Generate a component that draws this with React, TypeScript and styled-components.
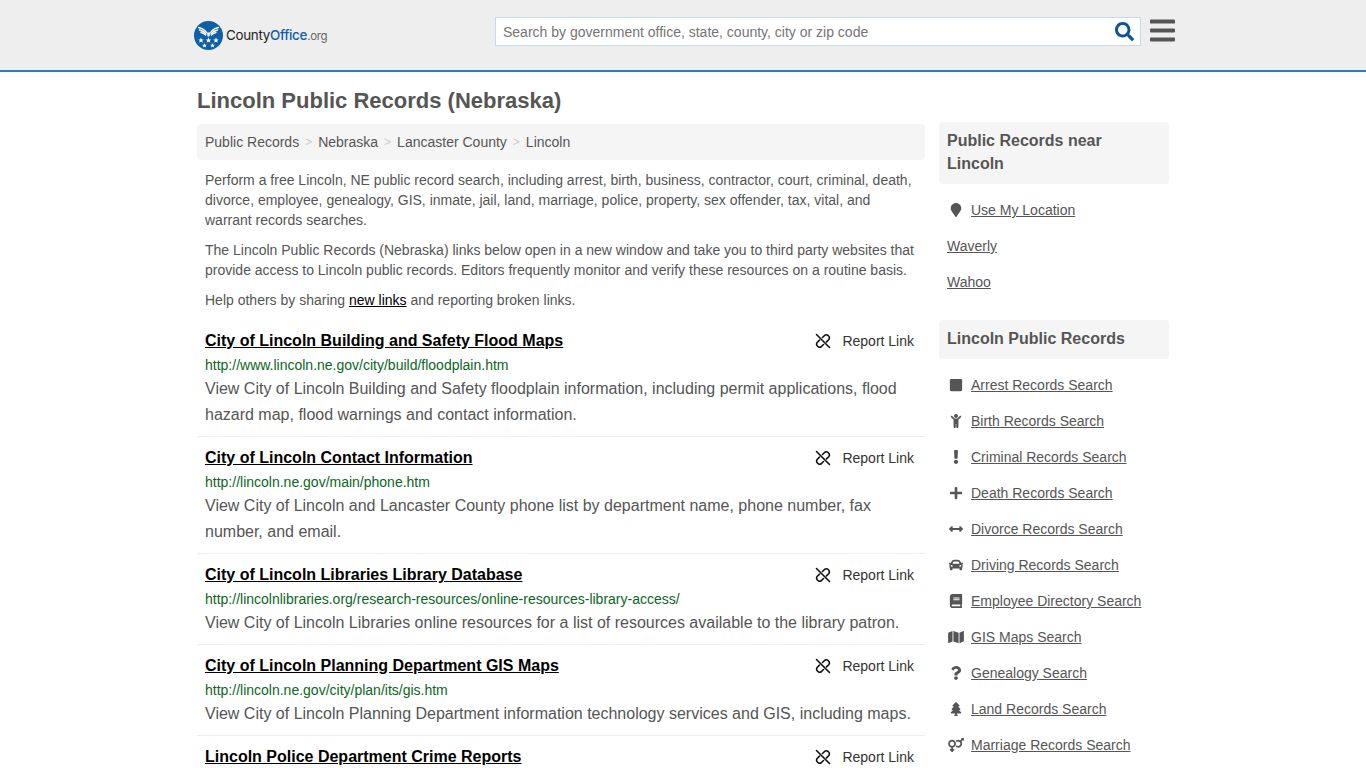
import React from "react";
import styled, { createGlobalStyle } from "styled-components";
import {
  FaSquare, FaChild, FaExclamation, FaPlus, FaArrowsAltH, FaCar, FaBook, FaMap,
  FaQuestion, FaTree, FaVenusMars, FaMapMarker, FaSearch, FaBars,
} from "react-icons/fa";

const Global = createGlobalStyle`
  html, body { margin: 0; padding: 0; background: #fff; height: 768px; overflow: hidden; }
  body { font-family: "Liberation Sans", Arial, sans-serif; color: #555; font-size: 14px; }
  * { box-sizing: border-box; }
`;

const Header = styled.header`
  height: 72px;
  background: #eeeeee;
  border-bottom: 2px solid #337ab7;
`;
const HeaderInner = styled.div`
  width: 992px;
  margin: 0 0 0 187px;
  height: 70px;
  display: flex;
  align-items: flex-start;
`;
const Logo = styled.a`
  display: flex;
  align-items: center;
  width: 301px;
  height: 30px;
  margin: 20px 0 0 7px;
  gap: 3px;
`;
const LogoText = styled.span`
  font-family: Inter, "Liberation Sans", sans-serif;
  font-size: 13.4px;
  letter-spacing: -0.3px;
  color: #222;
`;
const LogoBlue = styled.span`
  color: #0f5ea8;
  font-weight: 500;
`;
const LogoGray = styled.span`
  color: #666;
  font-size: 11.5px;
`;
const SearchBox = styled.div`
  width: 646px;
  height: 29px;
  margin-top: 17px;
  background: #fff;
  border: 1px solid #c9d9e6;
  display: flex;
  align-items: center;
  justify-content: space-between;
  padding: 0 6px 0 7px;
  font-size: 14px;
  color: #757575;
`;
const SearchIcon = styled(FaSearch)`
  width: 19px;
  height: 19px;
  color: #0b5394;
`;
const Burger = styled(FaBars)`
  width: 25px;
  height: 29px;
  margin: 16px 0 0 9px;
  color: #555;
`;
const Page = styled.div`
  width: 972px;
  margin-left: 197px;
  display: grid;
  grid-template-columns: 728px 230px;
  column-gap: 14px;
`;
const Main = styled.main``;
const Title = styled.h1`
  margin: 16px 0 0;
  height: 36px;
  font-size: 22px;
  line-height: 25px;
  font-weight: 700;
  color: #555;
`;
const Crumbs = styled.nav`
  height: 36px;
  background: #f5f5f5;
  border-radius: 4px;
  padding: 0 8px;
  display: flex;
  align-items: center;
  gap: 6px;
  font-size: 14px;
  color: #555;
`;
const Sep = styled.span`
  color: #ccc;
  font-size: 12px;
`;
const Intro = styled.p<{ $first?: boolean }>`
  margin: ${(p) => (p.$first ? "10px" : "0")} 0 10px;
  padding: 0 8px;
  font-size: 14px;
  line-height: 20px;
  color: #555;
`;
const Rows = styled.div`
  margin-top: 18px;
`;
const InlineLink = styled.a`
  color: #000;
  text-decoration: underline;
`;
const Row = styled.article`
  padding: 0 8px 8px;
  border-bottom: 1px solid #eee;
  margin-bottom: 8px;
`;
const RowHead = styled.div`
  display: flex;
  justify-content: space-between;
  align-items: center;
  height: 26px;
`;
const RowTitle = styled.a`
  font-size: 16px;
  font-weight: 700;
  color: #000;
  text-decoration: underline;
`;
const Report = styled.span`
  display: flex;
  align-items: center;
  gap: 11px;
  padding-right: 3px;
  font-size: 14px;
  color: #333;
`;
const UnlinkSvg = styled.svg`
  width: 16px;
  height: 16px;
  fill: none;
  stroke: #111;
  stroke-width: 1.6;
  stroke-linecap: round;
  stroke-linejoin: round;
`;
const Url = styled.div`
  font-size: 14px;
  line-height: 20px;
  margin: 1px 0;
  color: #0b6623;
`;
const Desc = styled.p`
  margin: 0;
  font-size: 16px;
  line-height: 26px;
  color: #555;
`;
const Side = styled.aside`
  padding-top: 50px;
`;
const SideHead = styled.h3`
  margin: 0 0 8px;
  background: #f5f5f5;
  border-radius: 4px;
  padding: 7px 8px 9px;
  font-size: 16px;
  line-height: 23px;
  font-weight: 700;
  color: #555;
`;
const SideList = styled.ul`
  list-style: none;
  margin: 0 0 20px;
  padding: 0;
`;
const SideItem = styled.li`
  height: 36px;
  display: flex;
  align-items: center;
  padding-left: 8px;
  font-size: 14px;
`;
const IconSlot = styled.span`
  width: 24px;
  flex: none;
  display: flex;
  justify-content: flex-start;
  padding-left: 1px;
  color: #555;
  font-size: 14px;
  & > svg { width: 16px; height: 14px; }
`;
const SideLink = styled.a`
  color: #555;
  text-decoration: underline;
`;

const rows = [
  { t: "City of Lincoln Building and Safety Flood Maps", u: "http://www.lincoln.ne.gov/city/build/floodplain.htm", d: "View City of Lincoln Building and Safety floodplain information, including permit applications, flood hazard map, flood warnings and contact information." },
  { t: "City of Lincoln Contact Information", u: "http://lincoln.ne.gov/main/phone.htm", d: "View City of Lincoln and Lancaster County phone list by department name, phone number, fax number, and email." },
  { t: "City of Lincoln Libraries Library Database", u: "http://lincolnlibraries.org/research-resources/online-resources-library-access/", d: "View City of Lincoln Libraries online resources for a list of resources available to the library patron." },
  { t: "City of Lincoln Planning Department GIS Maps", u: "http://lincoln.ne.gov/city/plan/its/gis.htm", d: "View City of Lincoln Planning Department information technology services and GIS, including maps." },
  { t: "Lincoln Police Department Crime Reports", u: "", d: "" },
];

const records: [React.ReactNode, string][] = [
  [<FaSquare />, "Arrest Records Search"],
  [<FaChild />, "Birth Records Search"],
  [<FaExclamation />, "Criminal Records Search"],
  [<FaPlus />, "Death Records Search"],
  [<FaArrowsAltH />, "Divorce Records Search"],
  [<FaCar />, "Driving Records Search"],
  [<FaBook />, "Employee Directory Search"],
  [<FaMap />, "GIS Maps Search"],
  [<FaQuestion />, "Genealogy Search"],
  [<FaTree />, "Land Records Search"],
  [<FaVenusMars />, "Marriage Records Search"],
];

const UnlinkIcon = () => (
  <UnlinkSvg viewBox="0 0 16 16">
    <path d="M7.500 4.500 9.500 2.500a3 3 0 0 1 4.200 4.200L11.500 8.900" />
    <path d="M8.500 11.500 6.500 13.500a3 3 0 0 1-4.200-4.200L4.500 7.100" />
    <path d="M1.500 1.500 14.500 14.500" />
  </UnlinkSvg>
);

const LogoMark = () => (
  <svg width="29" height="29" viewBox="0 0 29 29">
    <circle cx="14.5" cy="14.5" r="14.5" fill="#0f5ea8" />
    <g fill="none" stroke="#fff" strokeWidth="1.300" strokeLinecap="round">
      <path d="M4.500 6.500c2 .5 5.500 1.500 8 5" />
      <path d="M5.500 9c2 .5 4.500 1.500 6.500 4" />
      <path d="M7 11.500c1.500.3 3 1 4.500 2.500" />
      <path d="M24.500 6.500c-2 .5-5.500 1.500-8 5" />
      <path d="M23.500 9c-2 .5-4.500 1.500-6.500 4" />
      <path d="M22 11.500c-1.500.3-3 1-4.500 2.500" />
    </g>
    <path d="M13 11.500h3l-.5 4h-2z" fill="#fff" />
    <g fill="#fff">
      <polygon points="7,16.500 7.800,18.500 9.800,18.500 8.200,19.700 8.800,21.700 7,20.500 5.200,21.700 5.800,19.700 4.200,18.500 6.200,18.500" />
      <polygon points="14.500,16.500 15.300,18.500 17.300,18.500 15.700,19.700 16.300,21.700 14.500,20.500 12.700,21.700 13.300,19.700 11.700,18.500 13.700,18.500" />
      <polygon points="22,16.500 22.800,18.500 24.800,18.500 23.200,19.700 23.800,21.700 22,20.500 20.200,21.700 20.800,19.700 19.200,18.500 21.200,18.500" />
      <polygon points="10.500,22 11.200,23.700 13,23.700 11.600,24.800 12.100,26.500 10.500,25.500 8.900,26.500 9.400,24.800 8,23.700 9.800,23.700" />
      <polygon points="18.500,22 19.200,23.700 21,23.700 19.600,24.800 20.100,26.500 18.500,25.500 16.900,26.500 17.400,24.800 16,23.700 17.800,23.700" />
    </g>
  </svg>
);

export default function App() {
  return (
    <>
      <Global />
      <Header>
        <HeaderInner>
          <Logo>
            <LogoMark />
            <LogoText>
              County<LogoBlue>Office</LogoBlue><LogoGray>.org</LogoGray>
            </LogoText>
          </Logo>
          <SearchBox>
            <span>Search by government office, state, county, city or zip code</span>
            <SearchIcon />
          </SearchBox>
          <Burger />
        </HeaderInner>
      </Header>
      <Page>
        <Main>
          <Title>Lincoln Public Records (Nebraska)</Title>
          <Crumbs>
            <span>Public Records</span><Sep>&gt;</Sep>
            <span>Nebraska</span><Sep>&gt;</Sep>
            <span>Lancaster County</span><Sep>&gt;</Sep>
            <span>Lincoln</span>
          </Crumbs>
          <Intro $first>
            Perform a free Lincoln, NE public record search, including arrest, birth, business, contractor, court, criminal, death, divorce, employee, genealogy, GIS, inmate, jail, land, marriage, police, property, sex offender, tax, vital, and warrant records searches.
          </Intro>
          <Intro>
            The Lincoln Public Records (Nebraska) links below open in a new window and take you to third party websites that provide access to Lincoln public records. Editors frequently monitor and verify these resources on a routine basis.
          </Intro>
          <Intro>
            Help others by sharing <InlineLink>new links</InlineLink> and reporting broken links.
          </Intro>
          <Rows>
            {rows.map((r) => (
              <Row key={r.t}>
                <RowHead>
                  <RowTitle>{r.t}</RowTitle>
                  <Report><UnlinkIcon />Report Link</Report>
                </RowHead>
                {r.u && <Url>{r.u}</Url>}
                {r.d && <Desc>{r.d}</Desc>}
              </Row>
            ))}
          </Rows>
        </Main>
        <Side>
          <SideHead>Public Records near Lincoln</SideHead>
          <SideList>
            <SideItem><IconSlot><FaMapMarker /></IconSlot><SideLink>Use My Location</SideLink></SideItem>
            <SideItem><SideLink>Waverly</SideLink></SideItem>
            <SideItem><SideLink>Wahoo</SideLink></SideItem>
          </SideList>
          <SideHead>Lincoln Public Records</SideHead>
          <SideList>
            {records.map(([icon, label]) => (
              <SideItem key={label}><IconSlot>{icon}</IconSlot><SideLink>{label}</SideLink></SideItem>
            ))}
          </SideList>
        </Side>
      </Page>
    </>
  );
}
